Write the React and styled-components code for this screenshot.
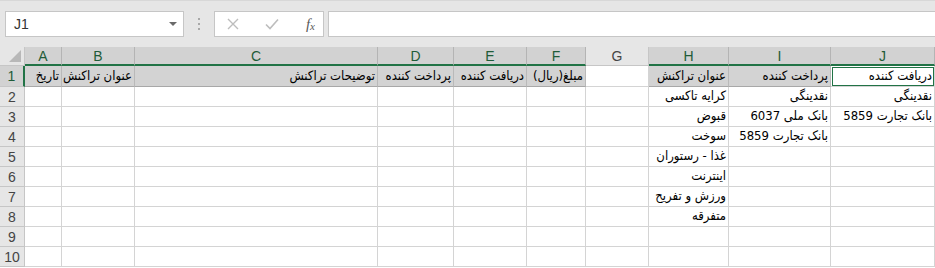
import React from "react";
import styled, { createGlobalStyle } from "styled-components";

const GlobalStyle = createGlobalStyle`
  html, body { margin: 0; padding: 0; background: #ffffff; overflow: hidden; }
  * { box-sizing: border-box; }
`;

const FONT = `"Liberation Sans", "DejaVu Sans Condensed", "DejaVu Sans", sans-serif`;

const Window = styled.div`
  width: 935px;
  height: 268px;
  overflow: hidden;
  font-family: ${FONT};
  background: #ffffff;
`;

const FormulaBar = styled.div`
  height: 47px;
  background: #e6e6e6;
  border-top: 1px solid #d8d8d8;
  display: flex;
  align-items: flex-start;
  padding: 10px 0 0 5px;
`;

const NameBox = styled.div`
  width: 179px;
  height: 26px;
  background: #ffffff;
  border: 1px solid #c6c6c6;
  display: flex;
  align-items: center;
  justify-content: space-between;
  padding: 0 6px 0 8px;
  color: #333;
  font-size: 14px;
`;

const Caret = styled.span`
  width: 0;
  height: 0;
  border-left: 4px solid transparent;
  border-right: 4px solid transparent;
  border-top: 4px solid #6a6a6a;
`;

const Grip = styled.div`
  width: 30px;
  height: 26px;
  display: flex;
  flex-direction: column;
  align-items: center;
  justify-content: center;
  gap: 3px;
  & > i { width: 2px; height: 2px; background: #a8a8a8; display: block; }
`;

const FxBox = styled.div`
  width: 110px;
  height: 26px;
  background: #ffffff;
  border: 1px solid #c6c6c6;
  display: flex;
  align-items: center;
  justify-content: space-between;
  padding: 0 8px 0 12px;
`;

const FxLabel = styled.span`
  font-family: "Liberation Serif", "DejaVu Serif", serif;
  font-style: italic;
  font-size: 15px;
  color: #5a5a5a;
  & > sub { font-size: 11px; vertical-align: -1px; }
`;

const FormulaInput = styled.div`
  flex: 1;
  margin-left: 4px;
  height: 26px;
  background: #ffffff;
  border: 1px solid #c6c6c6;
  border-right: none;
`;

const Sheet = styled.div`
  display: grid;
  grid-template-columns: 25px 37px 73px 243px 76px 73px 59px 63px 80px 102px 104px;
  grid-template-rows: 19px 21px repeat(9, 20px);
`;

const Corner = styled.div`
  background: #e6e6e6;
  border-right: 1px solid #c6c6c6;
  border-bottom: 1px solid #c6c6c6;
  display: flex;
  align-items: flex-end;
  justify-content: flex-end;
  padding: 0 3px 3px 0;
`;

const ColHeader = styled.div`
  background: ${(p) => (p.$sel ? "#d2d2d2" : "#e6e6e6")};
  border-right: 1px solid ${(p) => (p.$sel ? "#b4b4b4" : "#c6c6c6")};
  border-bottom: ${(p) => (p.$sel ? "2px solid #217346" : "1px solid #c6c6c6")};
  color: ${(p) => (p.$sel ? "#1f5c38" : "#444")};
  font-size: 14px;
  display: flex;
  align-items: center;
  justify-content: center;
  padding-top: ${(p) => (p.$sel ? "1px" : "0")};
`;

const RowHeader = styled.div`
  background: ${(p) => (p.$sel ? "#d2d2d2" : "#e6e6e6")};
  border-bottom: 1px solid #c6c6c6;
  border-right: ${(p) => (p.$sel ? "2px solid #217346" : "1px solid #c6c6c6")};
  color: ${(p) => (p.$sel ? "#1f5c38" : "#444")};
  font-size: 14px;
  display: flex;
  align-items: center;
  justify-content: center;
`;

const Cell = styled.div`
  direction: rtl;
  background: ${(p) => (p.$sel ? "#d3d3d3" : "#ffffff")};
  border-right: 1px solid ${(p) => (p.$sel ? "#b9b9b9" : "#d4d4d4")};
  border-bottom: 1px solid ${(p) => (p.$sel ? "#a8a8a8" : "#d4d4d4")};
  outline: ${(p) => (p.$active ? "1px solid #217346" : "none")};
  outline-offset: -2px;
  color: #000;
  font-family: "DejaVu Sans Condensed", "DejaVu Sans", sans-serif;
  font-size: 13px;
  white-space: nowrap;
  overflow: hidden;
  display: flex;
  align-items: flex-end;
  padding: 0 2px 1px 0;
  line-height: 18px;
`;

const cols = ["A", "B", "C", "D", "E", "F", "G", "H", "I", "J"];
const selCols = new Set(["A", "B", "C", "D", "E", "F", "H", "I", "J"]);

const data = {
  1: {
    A: "تاریخ",
    B: "عنوان تراکنش",
    C: "توضیحات تراکنش",
    D: "پرداخت کننده",
    E: "دریافت کننده",
    F: "مبلغ(ریال)",
    H: "عنوان تراکنش",
    I: "پرداخت کننده",
    J: "دریافت کننده",
  },
  2: { H: "کرایه تاکسی", I: "نقدینگی", J: "نقدینگی" },
  3: { H: "قبوض", I: "بانک ملی 6037", J: "بانک تجارت 5859" },
  4: { H: "سوخت", I: "بانک تجارت 5859" },
  5: { H: "غذا - رستوران" },
  6: { H: "اینترنت" },
  7: { H: "ورزش و تفریح" },
  8: { H: "متفرقه" },
  9: {},
  10: {},
};

const shaded = new Set(["A1", "B1", "C1", "D1", "E1", "F1", "H1", "I1"]);

export default function App() {
  const rows = Object.keys(data).map(Number);
  return (
    <Window>
      <GlobalStyle />
      <FormulaBar>
        <NameBox>
          <span>J1</span>
          <Caret />
        </NameBox>
        <Grip>
          <i />
          <i />
          <i />
        </Grip>
        <FxBox>
          <svg width="12" height="12" viewBox="0 0 12 12">
            <path d="M1 1 L11 11 M11 1 L1 11" stroke="#bdbdbd" strokeWidth="1.4" fill="none" />
          </svg>
          <svg width="14" height="12" viewBox="0 0 14 12">
            <path d="M1 6.5 L5 10.5 L13 1.5" stroke="#bdbdbd" strokeWidth="1.6" fill="none" />
          </svg>
          <FxLabel>
            f<sub>x</sub>
          </FxLabel>
        </FxBox>
        <FormulaInput />
      </FormulaBar>
      <Sheet>
        <Corner>
          <svg width="12" height="12" viewBox="0 0 12 12">
            <path d="M12 0 L12 12 L0 12 Z" fill="#b8b8b8" />
          </svg>
        </Corner>
        {cols.map((c) => (
          <ColHeader key={c} $sel={selCols.has(c)}>
            {c}
          </ColHeader>
        ))}
        {rows.map((r) => (
          <React.Fragment key={r}>
            <RowHeader $sel={r === 1}>{r}</RowHeader>
            {cols.map((c) => (
              <Cell
                key={c}
                $sel={shaded.has(c + r)}
                $active={c + r === "J1"}
              >
                {data[r][c] || ""}
              </Cell>
            ))}
          </React.Fragment>
        ))}
      </Sheet>
    </Window>
  );
}
